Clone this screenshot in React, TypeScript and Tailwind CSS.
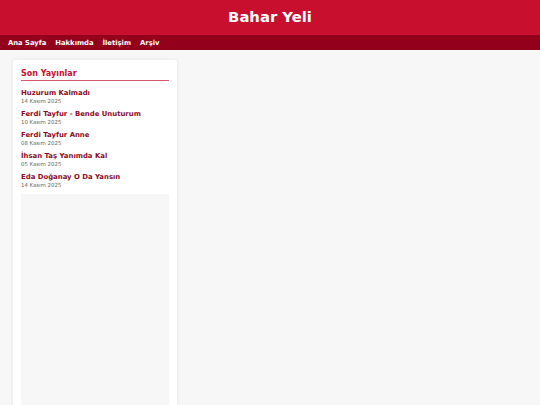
import React from 'react';

const posts = [
  { title: 'Huzurum Kalmadı', date: '14 Kasım 2025' },
  { title: 'Ferdi Tayfur - Bende Unuturum', date: '10 Kasım 2025' },
  { title: 'Ferdi Tayfur Anne', date: '08 Kasım 2025' },
  { title: 'İhsan Taş Yanımda Kal', date: '05 Kasım 2025' },
  { title: 'Eda Doğanay O Da Yansın', date: '14 Kasım 2025' },
];

const nav = ['Ana Sayfa', 'Hakkımda', 'İletişim', 'Arşiv'];

export default function App() {
  return (
    <div className="min-h-screen bg-[#f7f7f7] font-['DejaVu_Sans',Verdana,sans-serif]">
      <header className="h-[35px] bg-[#c8102e] flex items-center justify-center">
        <h1 className="text-[14.8px] leading-none font-bold text-white">Bahar Yeli</h1>
      </header>
      <nav className="h-[15px] bg-[#93001b] flex items-center gap-[9px] px-[8px] pt-[1px]">
        {nav.map((n) => (
          <a key={n} className="text-[6.8px] leading-none font-bold text-white">
            {n}
          </a>
        ))}
      </nav>

      <div className="flex px-[13px] pt-[10px]">
        <aside className="w-[164px] bg-white rounded-[3px] shadow-[0_0_4px_rgba(0,0,0,0.08)] px-[8px] pt-[9px] h-[360px] flex flex-col">
          <h2 className="text-[8px] leading-[10px] font-bold text-[#c8102e] pb-[1px] border-b border-[#c8102e]/70">
            Son Yayınlar
          </h2>
          <ul className="mt-[8px] flex flex-col gap-[6px]">
            {posts.map((p) => (
              <li key={p.title} className="flex flex-col">
                <span className="text-[6.9px] leading-[9px] font-bold text-[#8b0a1e]">{p.title}</span>
                <span className="text-[5.4px] leading-[6px] text-[#666]">{p.date}</span>
              </li>
            ))}
          </ul>
          <div className="mt-[6px] flex-1 bg-[#f7f7f7]" />
        </aside>
      </div>
    </div>
  );
}
